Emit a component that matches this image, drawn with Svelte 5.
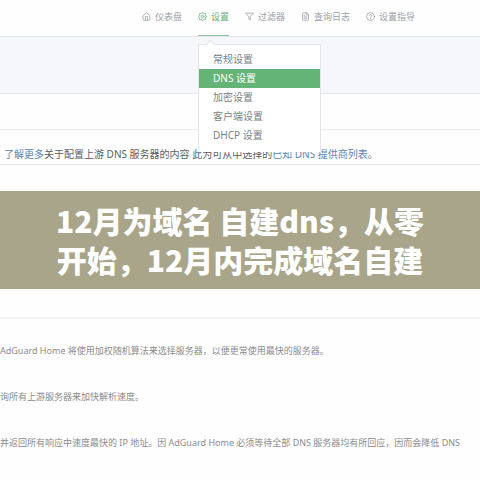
<script lang="ts">
  type Icon = "home" | "gear" | "filter" | "file" | "help";

  interface NavItem {
    icon: Icon;
    label: string;
  }

  const nav: NavItem[] = [
    { icon: "home", label: "仪表盘" },
    { icon: "gear", label: "设置" },
    { icon: "filter", label: "过滤器" },
    { icon: "file", label: "查询日志" },
    { icon: "help", label: "设置指导" },
  ];

  const menu = ["常规设置", "DNS 设置", "加密设置", "客户端设置", "DHCP 设置"];

  const modes = [
    "AdGuard Home 将使用加权随机算法来选择服务器，以便更常使用最快的服务器。",
    "询所有上游服务器来加快解析速度。",
    "并返回所有响应中速度最快的 IP 地址。因 AdGuard Home 必须等待全部 DNS 服务器均有所回应，因而会降低 DNS",
  ];

  let activeNav = $state("设置");
  let activeMenu = $state("DNS 设置");
</script>

<div class="page">
  <header>
    <nav>
      {#each nav as item}
        <div class="nav-item" class:active={item.label === activeNav}>
          <a href="#{item.icon}" class="nav-link" onclick={() => (activeNav = item.label)}>
            <svg viewBox="0 0 24 24" aria-hidden="true">
              {#if item.icon === "home"}
                <path d="M3 9.5 12 2l9 7.5V20a2 2 0 0 1-2 2H5a2 2 0 0 1-2-2z" />
                <path d="M9 22V12h6v10" />
              {:else if item.icon === "gear"}
                <circle cx="12" cy="12" r="3.5" />
                <path
                  d="M19.4 15a1.7 1.7 0 0 0 .3 1.8l.1.1a2 2 0 1 1-2.8 2.8l-.1-.1a1.7 1.7 0 0 0-2.9 1.2v.2a2 2 0 0 1-4 0v-.1a1.7 1.7 0 0 0-2.9-1.2l-.1.1a2 2 0 1 1-2.8-2.8l.1-.1a1.7 1.7 0 0 0-1.2-2.9H3a2 2 0 0 1 0-4h.1a1.7 1.7 0 0 0 1.2-2.9l-.1-.1a2 2 0 1 1 2.8-2.8l.1.1a1.7 1.7 0 0 0 2.9-1.2V3a2 2 0 0 1 4 0v.1a1.7 1.7 0 0 0 2.9 1.2l.1-.1a2 2 0 1 1 2.8 2.8l-.1.1a1.7 1.7 0 0 0 1.2 2.9h.1a2 2 0 0 1 0 4h-.1a1.7 1.7 0 0 0-1.5 1z"
                />
              {:else if item.icon === "filter"}
                <path d="M22 3H2l8 9.5V19l4 2v-8.5z" />
              {:else if item.icon === "file"}
                <path d="M14 2H6a2 2 0 0 0-2 2v16a2 2 0 0 0 2 2h12a2 2 0 0 0 2-2V8z" />
                <path d="M14 2v6h6M16 13H8M16 17H8M10 9H8" />
              {:else}
                <circle cx="12" cy="12" r="10.5" />
                <path d="M9 9a3 3 0 0 1 5.8 1c0 2-2.8 2.5-2.8 4M12 17.5v.5" />
              {/if}
            </svg>
            <span>{item.label}</span>
          </a>
          {#if item.icon === "gear"}
            <div class="dropdown">
              {#each menu as entry}
                <a
                  href="#settings"
                  class="dropdown-item"
                  class:selected={entry === activeMenu}
                  onclick={() => (activeMenu = entry)}
                >
                  {entry}
                </a>
              {/each}
            </div>
          {/if}
        </div>
      {/each}
    </nav>
  </header>

  <div class="band"></div>
  <div class="card-head"></div>

  <p class="upstream">
    <a href="#more">了解更多</a>关于配置上游 DNS 服务器的内容 此为可从中选择的<a href="#providers">已知 DNS 提供商列表</a>。
  </p>

  <h1>12月为域名 自建dns，从零<br />开始，12月内完成域名自建</h1>

  <div class="divider"></div>

  <div class="modes">
    {#each modes as text}
      <p>{text}</p>
    {/each}
  </div>
</div>

<style>
  :global(body) {
    background: #fefefe;
    font-family: "Noto Sans", "Noto Sans CJK SC", sans-serif;
    font-size: 10px;
  }
  .page {
    overflow: hidden;
  }
  a {
    text-decoration: none;
  }
  header {
    border-bottom: 1px solid #dfe5ea;
  }
  nav {
    display: flex;
    gap: 16px;
    padding-left: 142px;
  }
  .nav-item {
    position: relative;
    flex-shrink: 0;
  }
  .nav-link {
    display: flex;
    align-items: center;
    gap: 4px;
    height: 33px;
    border-bottom: 1px solid transparent;
    padding-bottom: 2px;
    box-sizing: content-box;
    color: #9a9fa8;
    font-size: 9px;
    line-height: 33px;
  }
  .active .nav-link {
    color: #67b279;
    border-bottom-color: #8cc49e;
  }
  svg {
    width: 9px;
    height: 9px;
    fill: none;
    stroke: currentColor;
    stroke-width: 2;
    stroke-linecap: round;
    stroke-linejoin: round;
  }
  .dropdown {
    position: absolute;
    top: 44px;
    left: 0;
    z-index: 2;
    width: 123px;
    box-sizing: border-box;
    padding: 5px 0 6px;
    background: #fff;
    border: 1px solid #e3e6ec;
    border-bottom-color: #fff;
  }
  .dropdown::before {
    content: "";
    position: absolute;
    top: -4px;
    left: 8px;
    width: 6px;
    height: 6px;
    background: #fff;
    border: 1px solid #e3e6ec;
    border-width: 1px 0 0 1px;
    transform: rotate(45deg);
  }
  .dropdown-item {
    display: block;
    padding: 0 14px;
    color: #7b7f86;
    line-height: 19px;
  }
  .dropdown-item.selected {
    background: #64b377;
    color: #fff;
  }
  .band {
    height: 56px;
    background: #f5f7fb;
    border-bottom: 1px solid #e4e9ed;
  }
  .card-head {
    height: 35px;
    border-bottom: 1px solid #e9ecef;
  }
  .upstream {
    margin: 0;
    padding: 14px 4px 0;
    border-bottom: 1px solid #e4e6e8;
    color: #5a5e64;
    line-height: 20px;
    white-space: nowrap;
  }
  .upstream a {
    color: #5b84b5;
  }
  h1 {
    margin: 26px 0 0;
    padding: 10px 0;
    background: #a8a58a;
    color: #fff;
    font-family: "Noto Sans CJK SC", sans-serif;
    font-size: 30px;
    font-weight: 900;
    line-height: 39px;
    text-align: center;
  }
  .divider {
    margin-top: 28px;
    height: 2px;
    background: #f2f2f2;
  }
  .modes {
    display: grid;
    gap: 26px;
    padding: 22px 0;
  }
  .modes p {
    margin: 0;
    color: #8c8c8c;
    font-size: 9px;
    line-height: 20px;
    white-space: nowrap;
  }
</style>
